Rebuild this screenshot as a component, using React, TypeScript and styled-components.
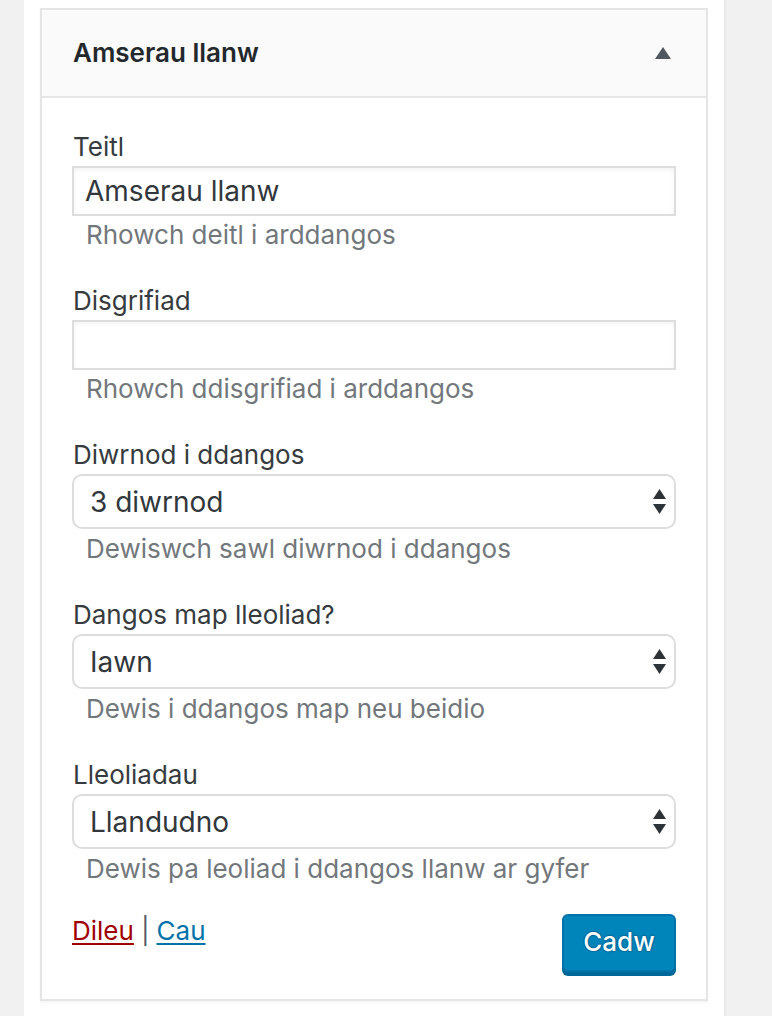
import React from "react";
import styled, { createGlobalStyle } from "styled-components";

const GlobalStyle = createGlobalStyle`
  html, body { margin: 0; padding: 0; }
  body {
    background: #f1f1f1;
    font-family: Inter, "Noto Sans", "Liberation Sans", sans-serif;
    -webkit-font-smoothing: antialiased;
  }
  * { box-sizing: border-box; }
`;

const Page = styled.div`
  padding-left: 24px;
  min-height: 1016px;
`;

const Column = styled.div`
  width: 702px;
  min-height: 1016px;
  background: #ffffff;
  border-right: 2px solid #e9e9e9;
  padding: 8px 14px 0 16px;
`;

const Panel = styled.section`
  width: 668px;
  border: 2px solid #e5e5e5;
  background: #ffffff;
  box-shadow: 0 2px 2px rgba(0, 0, 0, 0.04);
`;

const Header = styled.header`
  height: 88px;
  background: #fafafa;
  border-bottom: 2px solid #e5e5e5;
  display: flex;
  align-items: center;
  justify-content: space-between;
  padding: 0 35px 0 31px;
`;

const Title = styled.h3`
  margin: 0;
  font-size: 26px;
  font-weight: 600;
  color: #23282d;
  line-height: 30px;
`;

const Toggle = styled.svg`
  width: 16px;
  height: 12px;
  display: block;
`;

const Body = styled.div`
  padding: 34px 30px 27px 30px;
`;

const Fields = styled.div`
  display: flex;
  flex-direction: column;
  gap: 36px;
`;

const Field = styled.div`
  display: flex;
  flex-direction: column;
`;

const Label = styled.label`
  display: block;
  font-size: 26px;
  line-height: 30px;
  color: #363b40;
  padding-left: 1px;
  margin-bottom: 4px;
`;

const TextInput = styled.input`
  width: 100%;
  height: 50px;
  border: 2px solid #dddddd;
  box-shadow: inset 0 2px 4px rgba(0, 0, 0, 0.05);
  background: #ffffff;
  padding: 0 10px 0 11px;
  font-family: inherit;
  font-size: 28px;
  color: #32373c;
  outline: none;
  border-radius: 0;
`;

const SelectWrap = styled.div`
  position: relative;
  width: 100%;
`;

const Select = styled.select`
  appearance: none;
  -webkit-appearance: none;
  width: 100%;
  height: 55px;
  border: 2px solid #dddddd;
  border-radius: 10px;
  background: #ffffff;
  padding: 0 40px 0 16px;
  font-family: inherit;
  font-size: 28px;
  color: #32373c;
  outline: none;
`;

const Arrows = styled.svg`
  position: absolute;
  right: 10px;
  top: 15px;
  width: 13px;
  height: 25px;
  pointer-events: none;
`;

const Hint = styled.p<{ $gap: number }>`
  margin: ${(p) => p.$gap}px 0 0 0;
  padding-left: 14px;
  font-size: 26px;
  line-height: 30px;
  color: #72777c;
`;

const Actions = styled.div`
  margin-top: 30px;
  display: flex;
  justify-content: space-between;
  align-items: flex-start;
`;

const Links = styled.div`
  font-size: 26px;
  line-height: 34px;
  color: #555d66;
  padding-left: 0;
`;

const Link = styled.a<{ $danger?: boolean }>`
  color: ${(p) => (p.$danger ? "#a00000" : "#0073aa")};
  text-decoration: underline;
  text-underline-offset: 3px;
  text-decoration-thickness: 2px;
  cursor: pointer;
`;

const Sep = styled.span`
  margin: 0 7px;
`;

const Button = styled.button`
  width: 114px;
  height: 58px;
  border: 2px solid #0073aa;
  border-radius: 6px;
  background: #0085ba;
  box-shadow: 0 4px 0 #006799;
  color: #ffffff;
  font-family: inherit;
  font-size: 26px;
  font-weight: 500;
  text-shadow: 0 -1px 1px #006799, 1px 0 1px #006799, 0 1px 1px #006799, -1px 0 1px #006799;
  padding: 0 0 4px 0;
  cursor: pointer;
`;

const SelectArrows = () => (
  <Arrows viewBox="0 0 13 25">
    <polygon points="6.5,0 13,10 0,10" fill="#2e3338" />
    <polygon points="0,15 13,15 6.5,25" fill="#2e3338" />
  </Arrows>
);

type SelectFieldProps = { label: string; value: string; options: string[]; hint: string };

const SelectField = ({ label, value, options, hint }: SelectFieldProps) => (
  <Field>
    <Label>{label}</Label>
    <SelectWrap>
      <Select defaultValue={value}>
        {options.map((o) => (
          <option key={o} value={o}>
            {o}
          </option>
        ))}
      </Select>
      <SelectArrows />
    </SelectWrap>
    <Hint $gap={5}>{hint}</Hint>
  </Field>
);

type InputFieldProps = { label: string; value: string; hint: string };

const InputField = ({ label, value, hint }: InputFieldProps) => (
  <Field>
    <Label>{label}</Label>
    <TextInput type="text" defaultValue={value} />
    <Hint $gap={4}>{hint}</Hint>
  </Field>
);

export default function App() {
  return (
    <>
      <GlobalStyle />
      <Page>
        <Column>
          <Panel>
            <Header>
              <Title>Amserau llanw</Title>
              <Toggle viewBox="0 0 16 12">
                <polygon points="8,0 16,12 0,12" fill="#50575e" />
              </Toggle>
            </Header>
            <Body>
              <Fields>
                <InputField label="Teitl" value="Amserau llanw" hint="Rhowch deitl i arddangos" />
                <InputField label="Disgrifiad" value="" hint="Rhowch ddisgrifiad i arddangos" />
                <SelectField
                  label="Diwrnod i ddangos"
                  value="3 diwrnod"
                  options={["1 diwrnod", "2 diwrnod", "3 diwrnod", "4 diwrnod", "5 diwrnod"]}
                  hint="Dewiswch sawl diwrnod i ddangos"
                />
                <SelectField
                  label="Dangos map lleoliad?"
                  value="Iawn"
                  options={["Iawn", "Na"]}
                  hint="Dewis i ddangos map neu beidio"
                />
                <SelectField
                  label="Lleoliadau"
                  value="Llandudno"
                  options={["Llandudno", "Caergybi", "Aberystwyth"]}
                  hint="Dewis pa leoliad i ddangos llanw ar gyfer"
                />
              </Fields>
              <Actions>
                <Links>
                  <Link $danger>Dileu</Link>
                  <Sep>|</Sep>
                  <Link>Cau</Link>
                </Links>
                <Button type="button">Cadw</Button>
              </Actions>
            </Body>
          </Panel>
        </Column>
      </Page>
    </>
  );
}
